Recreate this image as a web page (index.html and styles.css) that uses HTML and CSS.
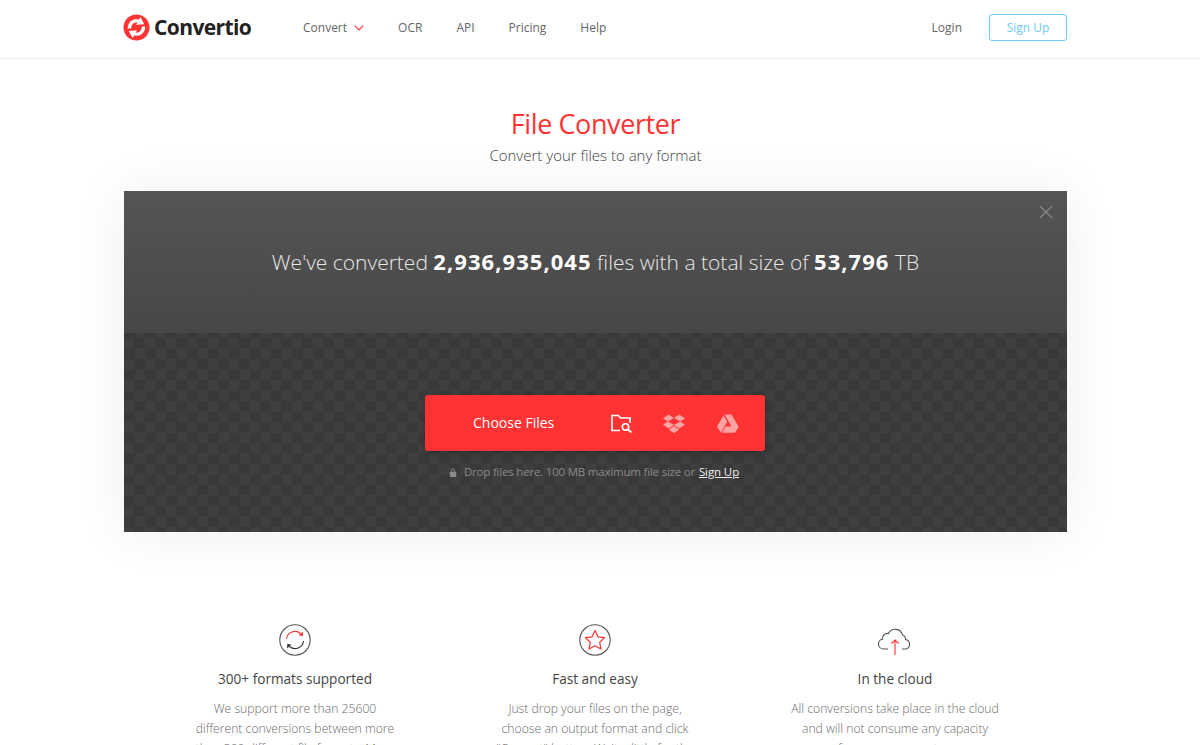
FILE: index.html
```html
<!DOCTYPE html>
<html lang="en">
<head>
<meta charset="utf-8">
<title>Convertio — File Converter</title>
<link rel="stylesheet" href="styles.css">
</head>
<body>
<header class="topbar">
  <div class="wrap topbar-inner">
    <a class="logo" href="#">
      <svg class="logo-mark" viewBox="0 0 28 28" width="27" height="27">
        <circle cx="14" cy="14" r="13.5" fill="#ff3333"/>
        <path d="M5 15a9 9 0 0 1 11.500-9.300L18 3l4 7.500-8.500.6 1.500-2.600A6 6 0 0 0 8.500 15z" fill="#fff"/>
        <path d="M23 13a9 9 0 0 1-11.500 9.300L10 25l-4-7.500 8.500-.6-1.500 2.600A6 6 0 0 0 19.500 13z" fill="#fff"/>
      </svg>
      <span class="logo-text">Convertio</span>
    </a>
    <nav class="mainnav">
      <a href="#" class="nav-convert">Convert
        <svg class="chev" viewBox="0 0 10 6" width="10" height="6"><path d="M.7.7 5 5 9.300.7" fill="none" stroke="#ff3333" stroke-width="1.200"/></svg>
      </a>
      <a href="#">OCR</a>
      <a href="#">API</a>
      <a href="#">Pricing</a>
      <a href="#">Help</a>
    </nav>
    <div class="auth">
      <a href="#" class="login">Login</a>
      <a href="#" class="signup">Sign Up</a>
    </div>
  </div>
</header>

<main class="wrap">
  <section class="hero">
    <h1>File Converter</h1>
    <p>Convert your files to any format</p>
  </section>

  <section class="panel">
    <div class="stats">
      <svg class="close" viewBox="0 0 14 14" width="14" height="14"><path d="M.8.8l12.400 12.400M13.200.8.800 13.200" stroke="#8f8f8f" stroke-width="1.200" fill="none"/></svg>
      <p>We've converted <b>2,936,935,045</b> files with a total size of <b>53,796</b> TB</p>
    </div>
    <div class="drop">
      <div class="choose">
        <span class="choose-label">Choose Files</span>
        <span class="choose-icons">
          <svg class="folder" viewBox="0 0 22 19" width="22" height="19"><path d="M9 16.500H1V1.500h6.500l2 2.500H19v5" fill="none" stroke="#fff" stroke-width="1.600"/><circle cx="14.500" cy="13" r="3.200" fill="none" stroke="#fff" stroke-width="1.600"/><path d="M17 15.500l3.500 3" stroke="#fff" stroke-width="1.800"/></svg>
          <svg viewBox="0 0 22 19" width="22" height="19"><path fill="#ffa3a3" d="M5.800.5 0 4.300l4.800 3.200L11 4 5.800.5zM16.200.5 11 4l6.200 3.500L22 4.300 16.200.5zM0 10.800l5.800 3.800L11 11 4.800 7.500 0 10.800zM22 10.800l-4.800-3.300L11 11l5.200 3.600L22 10.800zM5.800 15.700 11 19l5.200-3.300-5.200-3.600-5.200 3.600z"/></svg>
          <svg viewBox="0 0 22 19" width="22" height="19"><path fill="#ffa3a3" d="M7.500.5h7l7 12h-7zM6.600 1.400 10.200 7.800 4 18.700 0 12.500zM5 18.700l3.600-6.200H21.800l-3.600 6.200z"/></svg>
        </span>
      </div>
      <p class="hint"><svg viewBox="0 0 10 11" width="8" height="9"><rect x="1" y="4.500" width="8" height="6.500" rx=".6" fill="#8a8a8a"/><path d="M3 5V3a2 2 0 0 1 4 0v2" fill="none" stroke="#8a8a8a" stroke-width="1.200"/></svg>Drop files here. 100 MB maximum file size or <a href="#">Sign Up</a></p>
    </div>
  </section>

  <section class="features">
    <article class="feature">
      <svg class="ficon" viewBox="0 0 32 32" width="32" height="32">
        <circle cx="16" cy="16" r="15.200" fill="none" stroke="#555" stroke-width="1.100"/>
        <path d="M7.500 15A8.500 8.500 0 0 1 21.500 9.500" fill="none" stroke="#ff3333" stroke-width="1.100"/>
        <path d="M24 7.500l-.3 4.700-4.200-1z" fill="#ff3333"/>
        <path d="M24.500 17A8.500 8.500 0 0 1 10.500 22.500" fill="none" stroke="#333" stroke-width="1.100"/>
        <path d="M8 24.500l.3-4.700 4.200 1z" fill="#333"/>
      </svg>
      <h3>300+ formats supported</h3>
      <p>We support more than 25600 different conversions between more than 300 different file formats. More than any other converter.</p>
    </article>
    <article class="feature">
      <svg class="ficon" viewBox="0 0 32 32" width="32" height="32">
        <circle cx="16" cy="16" r="15.200" fill="none" stroke="#555" stroke-width="1.100"/>
        <path d="M16 6.500l2.900 6.300 6.800.8-5 4.700 1.300 6.800-6-3.400-6 3.400 1.300-6.800-5-4.700 6.800-.8z" fill="none" stroke="#ff3333" stroke-width="1.200" stroke-linejoin="round"/>
      </svg>
      <h3>Fast and easy</h3>
      <p>Just drop your files on the page, choose an output format and click "Convert" button. Wait a little for the process to complete.</p>
    </article>
    <article class="feature">
      <svg class="ficon" viewBox="0 0 36 32" width="36" height="32">
        <path d="M11 25H6.500a5 5 0 0 1-1-9.900 5 5 0 0 1 6-5.600 7.500 7.500 0 0 1 14 1.500 4.500 4.500 0 0 1 3 4.500 5 5 0 0 1 1 9.500H25" fill="none" stroke="#555" stroke-width="1.100"/>
        <path d="M18 31V16M14.500 19.500 18 16l3.500 3.500" fill="none" stroke="#ff3333" stroke-width="1.100"/>
      </svg>
      <h3>In the cloud</h3>
      <p>All conversions take place in the cloud and will not consume any capacity from your computer.</p>
    </article>
  </section>
</main>
</body>
</html>
```
FILE: styles.css
```css
* { box-sizing: border-box; }
html, body { margin: 0; padding: 0; height: 745px; overflow: hidden; background: #fff; }
body { font-family: "Open Sans", "Liberation Sans", sans-serif; color: #555; font-size: 13px; }
a { color: inherit; text-decoration: none; }
.wrap { width: 943px; margin-left: 124px; }

.topbar { height: 59px; border-bottom: 1px solid #ececec; }
.topbar-inner { height: 54px; display: flex; align-items: center; }
.logo { display: flex; align-items: center; gap: 4px; width: 179px; margin-left: -1px; margin-right: 1px; }
.logo-mark { flex: none; }
.logo-text { font-size: 21px; font-weight: 700; letter-spacing: -0.6px; color: #222; line-height: 1; }
.mainnav { display: flex; align-items: center; gap: 34px; font-size: 12px; color: #666; }
.nav-convert { display: flex; align-items: center; gap: 7px; }
.chev { margin-top: 2px; }
.auth { margin-left: auto; display: flex; align-items: center; gap: 27px; font-size: 12px; color: #666; }
.signup { width: 78px; height: 27px; border: 1px solid #71c8f5; border-radius: 3px; color: #71c8f5; display: flex; align-items: center; justify-content: center; }

.hero { text-align: center; padding-top: 46px; height: 132px; }
.hero h1 { margin: 0; font-size: 27px; font-weight: 400; line-height: 38px; color: #ff3333; letter-spacing: -0.4px; }
.hero p { margin: 1px 0 0; font-size: 15px; font-weight: 300; line-height: 22px; color: #444; }

.panel { height: 341px; background-color: #3c3c3c; background-image: conic-gradient(#393939 25%, #3f3f3f 0 50%, #393939 0 75%, #3f3f3f 0); background-size: 21px 21px; box-shadow: 0 0 50px rgba(0,0,0,.07); position: relative; display: flex; flex-direction: column; }
.stats { height: 142px; background: linear-gradient(#555, #474747); position: relative; display: flex; justify-content: center; padding-top: 53px; }
.stats p { margin: 0; font-size: 21px; font-weight: 300; line-height: 34px; color: #e8e8e8; }
.stats b { font-size: 22px; font-weight: 700; letter-spacing: 1.050px; color: #fff; }
.close { position: absolute; top: 14px; right: 14px; }
.drop { flex: 1; display: flex; flex-direction: column; align-items: center; padding-top: 62px; }
.choose { width: 340px; height: 56px; margin-right: 1px; background: #ff3333; border-radius: 3px; box-shadow: 0 2px 6px rgba(0,0,0,.25); display: flex; align-items: center; padding: 0 26px 0 48px; justify-content: space-between; }
.choose-label { color: #fff; font-size: 14px; padding-bottom: 2px; }
.choose-icons { display: flex; gap: 32px; align-items: center; }
.folder { margin-right: -2px; }
.hint { margin: 13px 3px 0 0; font-size: 11.500px; color: #8a8a8a; line-height: 16px; letter-spacing: -0.2px; }
.hint svg { margin-right: 7px; vertical-align: -1px; }
.hint a { color: #eee; text-decoration: underline; letter-spacing: -0.1px; margin-left: 1px; }

.features { display: flex; padding: 92px 21px 0; }
.feature { width: 300px; padding: 0 45px; text-align: center; }
.ficon { display: block; margin: 0 auto; height: 32px; }
.feature h3 { margin: 13px -20px 0; font-size: 13.600px; font-weight: 400; line-height: 20px; color: #444; }
.feature p { margin: 10px 0 0; font-size: 12.200px; font-weight: 300; line-height: 20px; color: #6a6a6a; }
```
